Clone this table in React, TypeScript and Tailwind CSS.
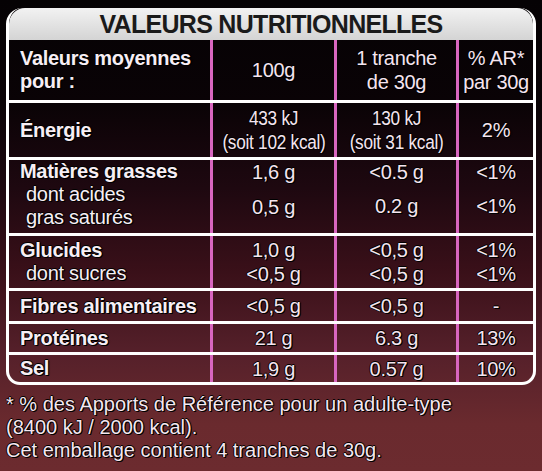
import React from "react";

const font = { fontFamily: '"Liberation Sans", Arial, sans-serif' };

const sh = "[text-shadow:1px_1px_0_#000,-1px_0_0_#000,0_-1px_0_#000,1px_0_1px_#000]";

function Cell({ children, className = "" }: { children: React.ReactNode; className?: string }) {
  return (
    <div className={`flex flex-col items-center text-center whitespace-nowrap text-[20px] leading-[24px] tracking-[-0.3px] text-[#f5e4ef] border-l-[3px] border-[#d866bf] ${sh} ${className}`}>
      {children}
    </div>
  );
}

function Row({
  h,
  label,
  c2,
  c3,
  c4,
  top = true,
  start = false,
}: {
  h: string;
  label: React.ReactNode;
  c2: React.ReactNode;
  c3: React.ReactNode;
  c4: React.ReactNode;
  top?: boolean;
  start?: boolean;
}) {
  const j = start ? "justify-start" : "justify-center";
  return (
    <div className={`grid grid-cols-[201px_124px_122px_1fr] ${h} ${top ? "border-t-[3px] border-white" : ""}`}>
      <div className={`flex flex-col ${j} pl-[11px] whitespace-nowrap text-[20px] leading-[23px] tracking-[-0.3px] text-[#f7eef4] ${sh}`}>{label}</div>
      <Cell className={j}>{c2}</Cell>
      <Cell className={j}>{c3}</Cell>
      <Cell className={j}>{c4}</Cell>
    </div>
  );
}

function En({ children }: { children: React.ReactNode }) {
  return <span className="inline-block scale-x-[0.86] text-[20px] leading-[24px]">{children}</span>;
}

export default function App() {
  return (
    <div
      style={font}
      className="w-[542px] h-[471px] overflow-hidden bg-[linear-gradient(180deg,#050204_0%,#0a0306_22%,#1e0810_40%,#3a1019_58%,#55202a_75%,#6a2a2e_90%,#6c2b2f_100%)] pt-[8px] px-[6px]"
    >
      <div className="rounded-t-[16px] rounded-b-[14px] border-[3px] border-t-0 border-white overflow-hidden">
        <div className="h-[32px] rounded-t-[16px] bg-[linear-gradient(180deg,#f2f2f2,#d4d4d4)] flex items-center justify-center">
          <span className="text-[25px] font-bold text-[#1a1a1a] tracking-[-0.7px] leading-none pt-[1px]">VALEURS NUTRITIONNELLES</span>
        </div>
        <Row
          top={false}
          h="h-[60px]"
          label={<><b>Valeurs moyennes</b><b>pour :</b></>}
          c2={<span>100g</span>}
          c3={<><span>1 tranche</span><span>de 30g</span></>}
          c4={<><span>% AR*</span><span>par 30g</span></>}
        />
        <Row
          h="h-[57px]"
          label={<b>Énergie</b>}
          c2={<><En>433 kJ</En><En>(soit 102 kcal)</En></>}
          c3={<><En>130 kJ</En><En>(soit 31 kcal)</En></>}
          c4={<span>2%</span>}
        />
        <Row
          h="h-[76px]"
          start
          label={<><b>Matières grasses</b><span className="pl-[6px]">dont acides</span><span className="pl-[6px]">gras saturés</span></>}
          c2={<><span>1,6 g</span><span className="mt-[11px]">0,5 g</span></>}
          c3={<><span>&lt;0.5 g</span><span className="mt-[10px]">0.2 g</span></>}
          c4={<><span>&lt;1%</span><span className="mt-[10px]">&lt;1%</span></>}
        />
        <Row
          h="h-[55px]"
          label={<><b>Glucides</b><span className="pl-[6px]">dont sucres</span></>}
          c2={<><span>1,0 g</span><span>&lt;0,5 g</span></>}
          c3={<><span>&lt;0,5 g</span><span>&lt;0,5 g</span></>}
          c4={<><span>&lt;1%</span><span>&lt;1%</span></>}
        />
        <Row h="h-[33px]" label={<b>Fibres alimentaires</b>} c2={<span>&lt;0,5 g</span>} c3={<span>&lt;0,5 g</span>} c4={<span>-</span>} />
        <Row h="h-[31px]" label={<b>Protéines</b>} c2={<span>21 g</span>} c3={<span>6.3 g</span>} c4={<span>13%</span>} />
        <Row h="h-[30px]" label={<b>Sel</b>} c2={<span>1,9 g</span>} c3={<span>0.57 g</span>} c4={<span>10%</span>} />
      </div>
      <div className={`pt-[8px] text-[20px] leading-[23px] text-[#f5e6ef] ${sh}`}>
        <div>* % des Apports de Référence pour un adulte-type</div>
        <div>(8400 kJ / 2000 kcal).</div>
        <div>Cet emballage contient 4 tranches de 30g.</div>
      </div>
    </div>
  );
}
